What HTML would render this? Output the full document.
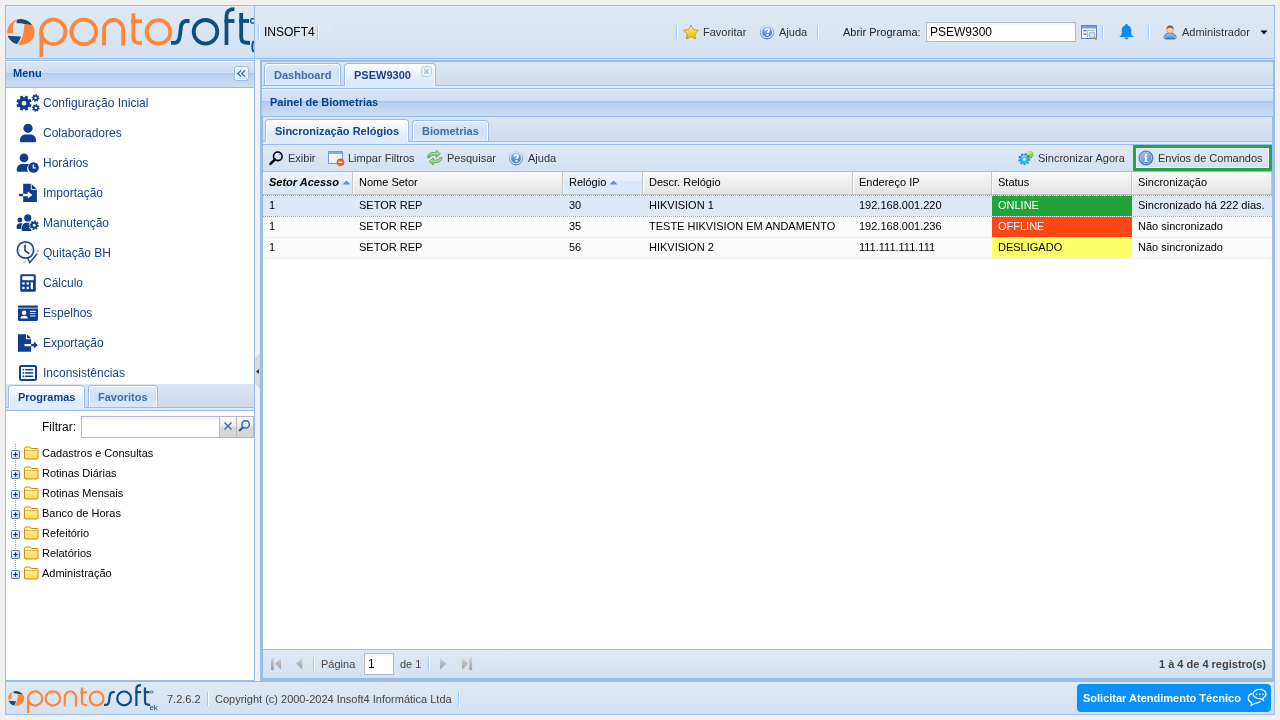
<!DOCTYPE html>
<html><head><meta charset="utf-8">
<style>
*{box-sizing:border-box;margin:0;padding:0}
html,body{width:1280px;height:720px;overflow:hidden;background:#f0f0f0;font-family:"Liberation Sans",sans-serif;position:relative}
body{will-change:transform}
.a{position:absolute}
.t{position:absolute;white-space:nowrap;line-height:13px;font-size:11px}
.t12{position:absolute;white-space:nowrap;line-height:14px;font-size:12px}
.b{font-weight:bold}
.sep{position:absolute;width:2px;height:14px;border-left:1px solid #98c8ff;border-right:1px solid #fff}
.hdr{background:linear-gradient(#dae7f6 0%,#cddef3 45%,#abc9ec 46%,#abc9ec 50%,#b8cfee 51%,#cbddf3 100%);box-shadow:inset 0 1px 0 #f3f7fb}
.tbg{background:linear-gradient(#dfe9f5,#d3e1f1)}
.tab{position:absolute;border:1px solid #99bce8;border-bottom:0;border-radius:4px 4px 0 0;box-shadow:inset 1px 1px 0 #fff,inset -1px 0 0 #fff;background:linear-gradient(#deecfd,#cfe1f8 50%,#dbe8f8)}
.tab.act{background:linear-gradient(#ffffff,#f2f7fe 25%,#deecfd 70%,#deecfd)}
.strip{position:absolute;height:4px;border-top:1px solid #99bce8;border-bottom:1px solid #99bce8;background:#deecfd}
</style></head><body>

<!-- ============ HEADER ============ -->
<div class="a tbg" style="left:5px;top:5px;width:1270px;height:54px;border:1px solid #99bce8"></div>
<div class="a" style="left:254px;top:6px;width:1px;height:52px;background:#99bce8"></div>


<svg class="a" style="left:0;top:0" width="254" height="58" viewBox="0 0 254 58">
<defs><clipPath id="tc"><path d="M16.6,0 H40 V22 L33,25.5 L24,24.5 L16.6,23Z"/></clipPath><clipPath id="ballc"><ellipse cx="20.9" cy="32" rx="13.7" ry="12.9"/></clipPath></defs>
<g id="logo">
 <g clip-path="url(#ballc)">
  <g clip-path="url(#tc)"><ellipse cx="20.9" cy="32" rx="11.6" ry="10.9" fill="none" stroke="#1c4a7c" stroke-width="4.4"/></g>
  <path d="M0,0 H17.3 L17.6,20 C14.8,21.5 13,23.5 12.9,27 V33.4 H0 Z" fill="#ff8636"/>
  <path d="M24.4,24 L33,25 L37,19 V48 H10 L17.8,45.2 C22.6,39.5 24.1,32 24.4,24Z" fill="#ff8636"/>
  <path d="M0,35.2 L20.9,36.5 C20.1,39.5 18.8,42 16.6,44.6 L14,48 H0Z" fill="#1c4a7c"/>
 </g>
 <g fill="none" stroke="#ff8636" stroke-width="3.8" stroke-linecap="butt">
  <circle cx="53.3" cy="31.9" r="12.2"/>
  <path d="M41.3,32 V57"/>
  <circle cx="83.8" cy="31.9" r="12.3"/>
  <path d="M104,45.5 V29.6 A9.6,9.6 0 0 1 123.2,29.6 V45.5"/>
  <path d="M133.4,13.2 V37 C133.4,42 136,43.2 142,43.2"/>
  <path d="M131,21.3 H142"/>
  <circle cx="158.5" cy="31.9" r="11.8"/>
 </g>
 <g fill="none" stroke="#0d5080" stroke-width="3.8">
  <path d="M171,42.9 H174.5 C178.3,42.9 179.4,39.8 179.9,35.5 L180.9,27.5 C181.4,23.2 183,21 186.5,21 H189.5"/>
  <circle cx="205.5" cy="31.8" r="11.8"/>
  <path d="M226.5,45 V16 C226.5,11 229,9.2 234.5,9.2"/>
  <path d="M224.5,21 H234.5"/>
  <path d="M241.2,13 V37 C241.2,42 243.5,43 250,43"/>
  <path d="M239.2,21 H249"/>
  <circle cx="252.8" cy="20.9" r="2.2" stroke-width="1.2"/>
 </g>
</g>
<path d="M253.6,41 C251.8,44 251.8,49 253.6,52" stroke="#0d5080" fill="none" stroke-width="2"/>
</svg>


<div class="a" style="left:260px;top:23px;width:71px;height:18px;background:linear-gradient(#dee8f5,#d8e4f3)"></div>
<div class="sep" style="left:258px;top:25px"></div>
<div class="t12" style="left:264px;top:25px;color:#000">INSOFT4</div>
<div class="sep" style="left:317px;top:25px"></div>
<div class="sep" style="left:676px;top:25px"></div>
<svg class="a" style="left:683px;top:24px" width="16" height="16" viewBox="0 0 16 16"><defs><linearGradient id="stg" x1="0" y1="0" x2="0" y2="1"><stop offset="0" stop-color="#fff7a8"/><stop offset="0.5" stop-color="#ffd83a"/><stop offset="1" stop-color="#f7b512"/></linearGradient></defs><path d="M8.00,1.00 L10.29,5.54 L15.32,6.32 L11.71,9.91 L12.53,14.93 L8.00,12.60 L3.47,14.93 L4.29,9.91 L0.68,6.32 L5.71,5.54Z" fill="url(#stg)" stroke="#c98a10" stroke-width="0.9" stroke-linejoin="round"/></svg>
<div class="t" style="left:703px;top:26px;color:#333">Favoritar</div>
<svg class="a" style="left:759px;top:24px" width="16" height="16" viewBox="0 0 16 16"><use href="#helpic"/></svg>
<div class="t" style="left:779px;top:26px;color:#333">Ajuda</div>
<div class="sep" style="left:817px;top:25px"></div>
<div class="t" style="left:843px;top:26px;color:#222">Abrir Programa:</div>
<div class="a" style="left:926px;top:22px;width:150px;height:20px;border:1px solid #b5b8c8;background:linear-gradient(#f0f0f0,#fff 3px,#fff)"></div>
<div class="t12" style="left:930px;top:25px;color:#000">PSEW9300</div>
<svg class="a" style="left:1081px;top:25px" width="17" height="16" viewBox="0 0 17 16"><rect x="0.5" y="0.5" width="15" height="13" fill="#f4f7fb" stroke="#5f85bd"/><rect x="1" y="1" width="14" height="2.5" fill="#79a0d6"/><rect x="2.5" y="5" width="3" height="1.3" fill="#3e6fb6"/><rect x="2.5" y="8.5" width="3" height="1.3" fill="#3e6fb6"/><path d="M6.5,5.5 H13.5 M6.5,5.5 V12" stroke="#9aa7b8" stroke-width="0.8"/><circle cx="11" cy="10" r="3" fill="#cfe3f7" stroke="#8cb0da" stroke-width="1"/><path d="M13,12.2 L15.5,14.8" stroke="#d08a3a" stroke-width="1.8"/></svg>
<div class="sep" style="left:1102px;top:25px"></div>
<svg class="a" style="left:1118px;top:23px" width="17" height="17" viewBox="0 0 17 17"><path d="M8.5,1 C9.4,1 9.9,1.6 9.9,2.4 C12.3,3 13.3,5 13.3,7.5 V11 C13.3,12 14.3,12.8 15.5,13.6 V14 H1.5 V13.6 C2.7,12.8 3.7,12 3.7,11 V7.5 C3.7,5 4.7,3 7.1,2.4 C7.1,1.6 7.6,1 8.5,1Z" fill="#0b8bf5"/><path d="M6.5,14.6 A2,2 0 0 0 10.5,14.6Z" fill="#0b8bf5"/></svg>
<div class="sep" style="left:1148px;top:25px"></div>
<svg class="a" style="left:1162px;top:24px" width="16" height="16" viewBox="0 0 16 16"><defs><linearGradient id="ush" x1="0" y1="0" x2="0" y2="1"><stop offset="0" stop-color="#9fd0ff"/><stop offset="1" stop-color="#2f86e6"/></linearGradient></defs><path d="M2,13.5 C2,10.5 4.5,9.2 8,9.2 C11.5,9.2 14,10.5 14,13.5 C14,14.6 13,15 12,15 H4 C3,15 2,14.6 2,13.5Z" fill="url(#ush)" stroke="#2a5cb8" stroke-width="0.8"/><circle cx="2.6" cy="13.4" r="1.2" fill="#f0a060"/><circle cx="13.4" cy="13.4" r="1.2" fill="#f0a060"/><ellipse cx="8" cy="5.6" rx="3.4" ry="3.8" fill="#fbd3a8" stroke="#c07a40" stroke-width="0.6"/><path d="M4.5,5.2 C4.5,2.5 6,1.4 8,1.4 C10,1.4 11.5,2.5 11.5,5.2 C10.5,4 9,3.8 8,3.8 C7,3.8 5.5,4 4.5,5.2Z" fill="#a0521e"/></svg>
<div class="t" style="left:1182px;top:26px;color:#333">Administrador</div>
<svg class="a" style="left:1260px;top:30px" width="8" height="5" viewBox="0 0 8 5"><path d="M0.5,0.5 H7.5 L4,4.5Z" fill="#000"/></svg>

<div class="a" style="left:5px;top:59px;width:1270px;height:1px;background:#dcdcdc"></div>
<!-- ============ MENU (west) ============ -->
<div class="a" style="left:5px;top:60px;width:250px;height:621px;border:1px solid #99bce8;background:#fff"></div>
<div class="a hdr" style="left:6px;top:61px;width:248px;height:26px"></div>
<div class="a" style="left:6px;top:87px;width:248px;height:1px;background:#99bce8"></div>


<div class="t b" style="left:13px;top:67px;color:#04408c">Menu</div>
<div class="a" style="left:234px;top:66px;width:15px;height:15px;border:1px solid #99bce8;border-radius:3px;background:linear-gradient(#fff,#e5f1fc);box-shadow:inset 0 0 0 1px #fff;background:linear-gradient(#fff,#fff 1px,#e6f2fd 2px,#d3e6fa)"></div>
<svg class="a" style="left:236px;top:68px" width="11" height="11" viewBox="0 0 11 11"><path d="M5,2.3 L1.8,5.5 L5,8.7 M8.9,2.3 L5.7,5.5 L8.9,8.7" fill="none" stroke="#2d5f98" stroke-width="1.2"/></svg>

<!-- items -->
<svg class="a" style="left:15px;top:93px" width="26" height="21" viewBox="0 0 26 21"><g fill="#0e3f8c" fill-rule="evenodd"><path d="M14.84,11.02 L16.65,11.72 L15.51,14.50 L13.73,13.73 L12.56,14.91 L13.34,16.68 L10.56,17.84 L9.85,16.04 L8.18,16.04 L7.48,17.85 L4.70,16.71 L5.47,14.93 L4.29,13.76 L2.52,14.54 L1.36,11.76 L3.16,11.05 L3.16,9.38 L1.35,8.68 L2.49,5.90 L4.27,6.67 L5.44,5.49 L4.66,3.72 L7.44,2.56 L8.15,4.36 L9.82,4.36 L10.52,2.55 L13.30,3.69 L12.53,5.47 L13.71,6.64 L15.48,5.86 L16.64,8.64 L14.84,9.35Z M11.30,10.20 A2.3,2.3 0 1 0 6.70,10.20 A2.3,2.3 0 1 0 11.30,10.20Z"/><path d="M23.50,4.75 L24.50,4.92 L24.20,6.40 L23.21,6.16 L22.75,6.84 L23.34,7.67 L22.09,8.51 L21.55,7.64 L20.75,7.80 L20.58,8.80 L19.10,8.50 L19.34,7.51 L18.66,7.05 L17.83,7.64 L16.99,6.39 L17.86,5.85 L17.70,5.05 L16.70,4.88 L17.00,3.40 L17.99,3.64 L18.45,2.96 L17.86,2.13 L19.11,1.29 L19.65,2.16 L20.45,2.00 L20.62,1.00 L22.10,1.30 L21.86,2.29 L22.54,2.75 L23.37,2.16 L24.21,3.41 L23.34,3.95Z M21.80,4.90 A1.2,1.2 0 1 0 19.40,4.90 A1.2,1.2 0 1 0 21.80,4.90Z"/><path d="M23.70,14.75 L24.70,14.92 L24.40,16.40 L23.41,16.16 L22.95,16.84 L23.54,17.67 L22.29,18.51 L21.75,17.64 L20.95,17.80 L20.78,18.80 L19.30,18.50 L19.54,17.51 L18.86,17.05 L18.03,17.64 L17.19,16.39 L18.06,15.85 L17.90,15.05 L16.90,14.88 L17.20,13.40 L18.19,13.64 L18.65,12.96 L18.06,12.13 L19.31,11.29 L19.85,12.16 L20.65,12.00 L20.82,11.00 L22.30,11.30 L22.06,12.29 L22.74,12.75 L23.57,12.16 L24.41,13.41 L23.54,13.95Z M22.00,14.90 A1.2,1.2 0 1 0 19.60,14.90 A1.2,1.2 0 1 0 22.00,14.90Z"/></g></svg>
<div class="t12" style="left:43px;top:96px;color:#15428b">Configuração Inicial</div>

<svg class="a" style="left:19px;top:123px" width="18" height="20" viewBox="0 0 18 20"><g fill="#0e3f8c"><circle cx="9" cy="5.3" r="4.6"/><path d="M1,17.5 C1,13.5 3.5,11.5 6.5,11.5 H11.5 C14.5,11.5 17,13.5 17,17.5 V18 C17,18.7 16.5,19.2 15.8,19.2 H2.2 C1.5,19.2 1,18.7 1,18Z"/></g></svg>
<div class="t12" style="left:43px;top:126px;color:#15428b">Colaboradores</div>

<svg class="a" style="left:16px;top:153px" width="24" height="20" viewBox="0 0 24 20"><g fill="#0e3f8c"><circle cx="8" cy="4.8" r="4.4"/><path d="M0.7,17.2 C0.7,13.2 3,11 6,11 H11.5 C12,11 12.5,11.1 13,11.2 A6.5,6.5 0 0 0 12,18.8 H1.9 C1.2,18.8 0.7,18.3 0.7,17.6Z"/><circle cx="17.5" cy="14.5" r="5.3"/></g><path d="M17.3,11.4 V14.9 H19.8" fill="none" stroke="#fff" stroke-width="1.2"/></svg>
<div class="t12" style="left:43px;top:156px;color:#15428b">Horários</div>

<svg class="a" style="left:14px;top:183px" width="24" height="20" viewBox="0 0 24 20"><path d="M9.2,0.8 H17.4 L22.9,6.3 V19 H9.2Z" fill="#0e3f8c"/><path d="M17.3,0.6 V6.4 H23.2" fill="none" stroke="#fff" stroke-width="0.9"/><path d="M5,10.8 H9.2 V13.2 H5Z" fill="#0e3f8c"/><path d="M9.2,10.8 H13.8 V8.6 L18.4,12 L13.8,15.4 V13.2 H9.2Z" fill="#fff"/></svg>
<div class="t12" style="left:43px;top:186px;color:#15428b">Importação</div>

<svg class="a" style="left:15px;top:213px" width="26" height="20" viewBox="0 0 26 20"><g fill="#0e3f8c"><circle cx="4.8" cy="7" r="2.4"/><path d="M1.5,14.8 C1.5,11.5 2.8,10.2 5,10.2 H7.6 C6.6,11.5 6.2,13.2 6.2,16 H2.5 C1.9,16 1.5,15.5 1.5,14.8Z"/><circle cx="12.75" cy="4.9" r="3.6"/><path d="M6.6,16.8 C6.6,12 8.5,9.8 11.5,9.8 H15.5 C16.2,9.8 16.8,10 17.3,10.3 C15.5,12.3 15.2,15.5 16.6,17.9 H7.6 C7,17.9 6.6,17.5 6.6,16.8Z"/></g>
<path d="M23.49,11.98 L24.80,12.13 L24.33,14.44 L23.07,14.08 L22.39,15.08 L23.21,16.11 L21.24,17.41 L20.61,16.26 L19.42,16.49 L19.27,17.80 L16.96,17.33 L17.32,16.07 L16.32,15.39 L15.29,16.21 L13.99,14.24 L15.14,13.61 L14.91,12.42 L13.60,12.27 L14.07,9.96 L15.33,10.32 L16.01,9.32 L15.19,8.29 L17.16,6.99 L17.79,8.14 L18.98,7.91 L19.13,6.60 L21.44,7.07 L21.08,8.33 L22.08,9.01 L23.11,8.19 L24.41,10.16 L23.26,10.79Z" fill="#fff"/><path d="M22.70,12.02 L24.00,12.23 L23.63,14.04 L22.35,13.73 L21.80,14.54 L22.58,15.61 L21.03,16.64 L20.35,15.51 L19.38,15.70 L19.17,17.00 L17.36,16.63 L17.67,15.35 L16.86,14.80 L15.79,15.58 L14.76,14.03 L15.89,13.35 L15.70,12.38 L14.40,12.17 L14.77,10.36 L16.05,10.67 L16.60,9.86 L15.82,8.79 L17.37,7.76 L18.05,8.89 L19.02,8.70 L19.23,7.40 L21.04,7.77 L20.73,9.05 L21.54,9.60 L22.61,8.82 L23.64,10.37 L22.51,11.05Z M20.70,12.20 A1.5,1.5 0 1 0 17.70,12.20 A1.5,1.5 0 1 0 20.70,12.20Z" fill="#0e3f8c" fill-rule="evenodd"/></svg>
<div class="t12" style="left:43px;top:216px;color:#15428b">Manutenção</div>

<svg class="a" style="left:14px;top:239px" width="26" height="26" viewBox="0 0 26 26"><g fill="none"><circle cx="11.5" cy="11" r="8.2" stroke="#234d8f" stroke-width="1.7"/><path d="M11.5,4.2 V5.5 M18.3,11 H17 M4.7,11 H6" stroke="#6d8fbf" stroke-width="0.8"/><path d="M11,5.8 V11.6 L15.2,14.8" stroke="#234d8f" stroke-width="1.7"/><path d="M13.5,18.8 L15.8,23.6 L23.2,14.8" stroke="#234d8f" stroke-width="1.5"/><path d="M23.8,10.6 V13.4 M22.4,12 H25.2" stroke="#8fa8d0" stroke-width="0.9"/><path d="M9,23.2 H12" stroke="#8fa8d0" stroke-width="0.9"/></g></svg>
<div class="t12" style="left:43px;top:246px;color:#15428b">Quitação BH</div>

<svg class="a" style="left:19px;top:273px" width="18" height="20" viewBox="0 0 18 20"><rect x="1.2" y="1.2" width="15.6" height="17.6" rx="1.5" fill="#0e3f8c"/><rect x="3.3" y="3.2" width="11.4" height="4" fill="#fff"/><g fill="#fff"><rect x="3.3" y="9.3" width="2.3" height="2.3"/><rect x="7.6" y="9.3" width="2.3" height="2.3"/><rect x="3.3" y="13.8" width="2.3" height="2.3"/><rect x="7.6" y="13.8" width="2.3" height="2.3"/><rect x="11.7" y="9.3" width="2.3" height="6.8"/></g></svg>
<div class="t12" style="left:43px;top:276px;color:#15428b">Cálculo</div>

<svg class="a" style="left:17px;top:304px" width="22" height="18" viewBox="0 0 22 18"><path d="M1,2.6 C1,1.9 1.5,1.4 2.2,1.4 H19.8 C20.5,1.4 21,1.9 21,2.6 V3.8 H1Z M1,4.6 H21 V15.8 C21,16.5 20.5,17 19.8,17 H2.2 C1.5,17 1,16.5 1,15.8Z" fill="#0e3f8c"/><circle cx="7.1" cy="8.8" r="2.3" fill="#fff"/><path d="M3.3,14.6 C3.3,12.5 4.8,11.7 7.1,11.7 C9.4,11.7 10.9,12.5 10.9,14.6Z" fill="#fff"/><g fill="#b9cbe6"><rect x="13" y="6.9" width="5.6" height="1"/><rect x="13" y="9.1" width="5.6" height="1"/><rect x="13" y="11.4" width="5.6" height="1.2"/></g><rect x="13" y="6.9" width="5.6" height="1" fill="#fff"/></svg>
<div class="t12" style="left:43px;top:306px;color:#15428b">Espelhos</div>

<svg class="a" style="left:17px;top:333px" width="22" height="20" viewBox="0 0 22 20"><g fill="#0e3f8c"><path d="M0.9,1.2 H9 V6.3 H14.1 V10.9 H7.5 V13.3 H14.1 V18.7 H0.9Z"/><path d="M10,1.2 L14.1,5.3 H10Z"/><path d="M14.1,10.9 H16.8 V8.6 L20.9,12.1 L16.8,15.6 V13.3 H14.1Z"/></g></svg>
<div class="t12" style="left:43px;top:336px;color:#15428b">Exportação</div>

<svg class="a" style="left:18px;top:364px" width="20" height="18" viewBox="0 0 20 18"><rect x="2" y="2" width="16" height="14" rx="1.5" fill="none" stroke="#0e3f8c" stroke-width="2"/><g fill="#0e3f8c"><circle cx="5.4" cy="5.6" r="0.95"/><circle cx="5.4" cy="8.9" r="0.95"/><circle cx="5.4" cy="12.2" r="0.95"/><rect x="7.2" y="4.9" width="8" height="1.5"/><rect x="7.2" y="8.2" width="8" height="1.5"/><rect x="7.2" y="11.5" width="8" height="1.5"/></g></svg>
<div class="t12" style="left:43px;top:366px;color:#15428b">Inconsistências</div>

<!-- tab bar Programas/Favoritos -->
<div class="a" style="left:6px;top:384px;width:248px;height:23px;background:linear-gradient(#dae5f3,#cfdcee)"></div>
<div class="strip" style="left:6px;top:407px;width:248px;border-left:0;border-right:0"></div>
<div class="tab act" style="left:8px;top:385px;width:77px;height:23px"></div>
<div class="t b" style="left:18px;top:391px;color:#15428b">Programas</div>
<div class="tab" style="left:88px;top:385px;width:70px;height:22px"></div>
<div class="t b" style="left:98px;top:391px;color:#416da3">Favoritos</div>

<!-- filter -->
<div class="t12" style="left:42px;top:420px;color:#000">Filtrar:</div>
<div class="a" style="left:81px;top:416px;width:173px;height:22px;border:1px solid #b5b8c8;background:linear-gradient(#eee,#fff 3px)"></div>
<div class="a" style="left:219px;top:417px;width:17px;height:20px;background:linear-gradient(#fbfbfb,#ececec 45%,#dadada 50%,#d3d3d3);border-left:1px solid #b5b8c8"></div>
<div class="a" style="left:236px;top:417px;width:17px;height:20px;background:linear-gradient(#fbfbfb,#ececec 45%,#dadada 50%,#d3d3d3);border-left:1px solid #b5b8c8"></div>
<svg class="a" style="left:223px;top:421px" width="10" height="10" viewBox="0 0 10 10"><path d="M1.5,1.5 L8.5,8.5 M8.5,1.5 L1.5,8.5" stroke="#3a6db5" stroke-width="1.4"/></svg>
<svg class="a" style="left:238px;top:419px" width="13" height="14" viewBox="0 0 13 14"><circle cx="7.6" cy="5.4" r="3.7" fill="none" stroke="#2a62b0" stroke-width="1.4"/><path d="M5,8.2 L1.2,12" stroke="#1f4f96" stroke-width="1.8"/></svg>

<svg class="a" style="left:0;top:0" width="0" height="0"><defs>
<linearGradient id="fold" x1="0" y1="0" x2="0" y2="1"><stop offset="0" stop-color="#fffaa8"/><stop offset="1" stop-color="#ffd658"/></linearGradient>
<linearGradient id="plusg" x1="0" y1="0" x2="1" y2="1"><stop offset="0" stop-color="#ffffff"/><stop offset="1" stop-color="#b9cde6"/></linearGradient>
<g id="treeic">
 <rect x="0.5" y="0.5" width="8" height="8" rx="1" fill="url(#plusg)" stroke="#5a7399"/>
 <path d="M2.2,4.5 H6.8 M4.5,2.2 V6.8" stroke="#16325e" stroke-width="1.2"/>
 <path d="M10.5,4.5 H11" stroke="#aaa" stroke-width="1"/>
 <path d="M13.5,-1.5 C13.5,-2.5 14,-3 15,-3 H18.5 C19.3,-3 19.6,-2.6 20,-2 L20.4,-1.5 H26 C26.8,-1.5 27,-1 27,-0.3 V8 C27,8.6 26.7,9 26,9 H14.5 C13.8,9 13.5,8.6 13.5,8Z" fill="url(#fold)" stroke="#c98b1a" stroke-width="1"/>
 <path d="M14,0.5 H26.5" stroke="#e0a93a" stroke-width="0.8"/>
</g></defs></svg>
<svg class="a" style="left:15px;top:444px" width="1" height="127"><path d="M0.5,0 V127" stroke="#a0a0a0" stroke-dasharray="1,1"/></svg>
<svg class="a" style="left:11px;top:444px" width="30" height="17" viewBox="0 -6 30 17"><use href="#treeic"/></svg>
<div class="t" style="left:42px;top:447px;color:#000">Cadastros e Consultas</div>
<svg class="a" style="left:11px;top:464px" width="30" height="17" viewBox="0 -6 30 17"><use href="#treeic"/></svg>
<div class="t" style="left:42px;top:467px;color:#000">Rotinas Diárias</div>
<svg class="a" style="left:11px;top:484px" width="30" height="17" viewBox="0 -6 30 17"><use href="#treeic"/></svg>
<div class="t" style="left:42px;top:487px;color:#000">Rotinas Mensais</div>
<svg class="a" style="left:11px;top:504px" width="30" height="17" viewBox="0 -6 30 17"><use href="#treeic"/></svg>
<div class="t" style="left:42px;top:507px;color:#000">Banco de Horas</div>
<svg class="a" style="left:11px;top:524px" width="30" height="17" viewBox="0 -6 30 17"><use href="#treeic"/></svg>
<div class="t" style="left:42px;top:527px;color:#000">Refeitório</div>
<svg class="a" style="left:11px;top:544px" width="30" height="17" viewBox="0 -6 30 17"><use href="#treeic"/></svg>
<div class="t" style="left:42px;top:547px;color:#000">Relatórios</div>
<svg class="a" style="left:11px;top:564px" width="30" height="17" viewBox="0 -6 30 17"><use href="#treeic"/></svg>
<div class="t" style="left:42px;top:567px;color:#000">Administração</div>

<!-- ============ CENTER ============ -->
<div class="a" style="left:260px;top:60px;width:1015px;height:622px;background:#99bce8"></div>
<!-- outer tab bar -->
<div class="a" style="left:262px;top:62px;width:1011px;height:23px;background:linear-gradient(#dde7f4,#cfdcee)"></div>
<div class="strip" style="left:262px;top:85px;width:1011px;border-left:0;border-right:0"></div>
<div class="tab" style="left:264px;top:63px;width:77px;height:22px"></div>
<div class="t b" style="left:274px;top:69px;color:#416da3">Dashboard</div>
<div class="tab act" style="left:344px;top:63px;width:92px;height:23px"></div>
<div class="t b" style="left:354px;top:69px;color:#15428b">PSEW9300</div>
<svg class="a" style="left:421px;top:66px" width="11" height="11" viewBox="0 0 11 11"><rect x="0.5" y="0.5" width="10" height="10" rx="3" fill="#eef4fc" stroke="#b4cbe8"/><path d="M3.3,3.3 L7.7,7.7 M7.7,3.3 L3.3,7.7" stroke="#a8bcd6" stroke-width="1.6"/></svg>
<!-- Painel header -->
<div class="a hdr" style="left:262px;top:89px;width:1011px;height:27px"></div>
<div class="t b" style="left:270px;top:96px;color:#04408c">Painel de Biometrias</div>
<!-- inner tab bar -->
<div class="a" style="left:263px;top:117px;width:1009px;height:24px;background:linear-gradient(#dde7f4,#cfdcee)"></div>
<div class="strip" style="left:263px;top:141px;width:1009px;border-left:0;border-right:0"></div>
<div class="tab act" style="left:265px;top:119px;width:144px;height:23px"></div>
<div class="t b" style="left:275px;top:125px;color:#15428b">Sincronização Relógios</div>
<div class="tab" style="left:412px;top:120px;width:77px;height:21px"></div>
<div class="t b" style="left:422px;top:125px;color:#416da3">Biometrias</div>
<!-- toolbar -->
<div class="a tbg" style="left:263px;top:145px;width:1009px;height:26px"></div>
<div class="a" style="left:263px;top:171px;width:1009px;height:1px;background:#99bce8"></div>

<svg class="a" style="left:0;top:0" width="0" height="0"><defs>
<radialGradient id="hlp2" cx="0.45" cy="0.3" r="0.7"><stop offset="0" stop-color="#8fb2e0"/><stop offset="0.7" stop-color="#5f8ecb"/><stop offset="1" stop-color="#4a78b8"/></radialGradient>
<linearGradient id="hring" x1="0" y1="0" x2="0" y2="1"><stop offset="0" stop-color="#c3d8f3"/><stop offset="1" stop-color="#3f6db3"/></linearGradient><g id="helpic"><circle cx="8" cy="8.2" r="6.7" fill="#d8e5f5" stroke="url(#hring)" stroke-width="1"/><circle cx="8" cy="8.2" r="5" fill="url(#hlp2)"/><path d="M6.2,6.6 C6.2,5.5 7,4.8 8.1,4.8 C9.2,4.8 10,5.5 10,6.4 C10,7.5 8.6,7.7 8.6,8.9 V9.1" fill="none" stroke="#fff" stroke-width="1.6"/><rect x="7.5" y="10.2" width="2" height="1.6" fill="#fff"/></g>
</defs></svg>
<svg class="a" style="left:269px;top:150px" width="16" height="16" viewBox="0 0 16 16"><circle cx="8.8" cy="6.3" r="4.3" fill="none" stroke="#000" stroke-width="1.6"/><path d="M10.5,3.9 L11.3,4.8" stroke="#000" stroke-width="1"/><path d="M6,9.4 L1.5,13.9" stroke="#000" stroke-width="2.6" stroke-linecap="round"/></svg>
<div class="t" style="left:288px;top:152px;color:#333">Exibir</div>
<svg class="a" style="left:327px;top:150px" width="18" height="17" viewBox="0 0 18 17"><defs><linearGradient id="wing" x1="0" y1="0" x2="1" y2="1"><stop offset="0" stop-color="#fff"/><stop offset="1" stop-color="#dfe6f0"/></linearGradient></defs><rect x="1.5" y="1.5" width="14" height="12" fill="url(#wing)" stroke="#6f9ad3"/><rect x="2" y="2" width="13" height="2" fill="#86aee2"/><circle cx="13.5" cy="12.3" r="3.5" fill="#f06a12" stroke="#c94f08" stroke-width="0.7"/><rect x="11.6" y="11.6" width="3.8" height="1.4" fill="#fff"/></svg>
<div class="t" style="left:348px;top:152px;color:#333">Limpar Filtros</div>
<svg class="a" style="left:426px;top:149px" width="18" height="18" viewBox="0 0 18 18"><defs><linearGradient id="grn" x1="0" y1="0" x2="0" y2="1"><stop offset="0" stop-color="#8fd27a"/><stop offset="0.5" stop-color="#a9df93"/><stop offset="1" stop-color="#4f9f40"/></linearGradient></defs><g fill="url(#grn)" stroke="#3f9033" stroke-width="0.6" stroke-linejoin="round"><path d="M1.2,8.6 C1.6,5.4 4,3.4 7.5,3.4 H10.2 V1.3 L14.4,4.8 L10.2,8.3 V6.2 H7.6 C5.6,6.2 4.2,7.1 3.8,8.6 Z"/><path d="M16.2,8.6 C15.8,11.8 13.4,13.8 9.9,13.8 H7.3 V16 L3.1,12.4 L7.3,8.9 V11 H9.8 C11.8,11 13.2,10.1 13.6,8.6 Z"/></g></svg>
<div class="t" style="left:447px;top:152px;color:#333">Pesquisar</div>
<svg class="a" style="left:508px;top:150px" width="16" height="16" viewBox="0 0 16 16"><use href="#helpic"/></svg>
<div class="t" style="left:528px;top:152px;color:#333">Ajuda</div>
<svg class="a" style="left:1017px;top:149px" width="19" height="18" viewBox="0 0 19 18"><defs><radialGradient id="bgear" cx="0.5" cy="0.55" r="0.5"><stop offset="0" stop-color="#3fe0ff"/><stop offset="0.6" stop-color="#1ab0f0"/><stop offset="1" stop-color="#1a78cc"/></radialGradient><radialGradient id="ggear" cx="0.4" cy="0.35" r="0.6"><stop offset="0" stop-color="#e2ff70"/><stop offset="1" stop-color="#5fb51a"/></radialGradient></defs>
<path d="M15.70,5.95 L16.68,6.15 L16.19,7.76 L15.26,7.37 L14.72,8.02 L15.27,8.87 L13.78,9.65 L13.40,8.72 L12.55,8.80 L12.35,9.78 L10.74,9.29 L11.13,8.36 L10.48,7.82 L9.63,8.37 L8.85,6.88 L9.78,6.50 L9.70,5.65 L8.72,5.45 L9.21,3.84 L10.14,4.23 L10.68,3.58 L10.13,2.73 L11.62,1.95 L12.00,2.88 L12.85,2.80 L13.05,1.82 L14.66,2.31 L14.27,3.24 L14.92,3.78 L15.77,3.23 L16.55,4.72 L15.62,5.10Z" fill="url(#ggear)"/><circle cx="12.7" cy="5.8" r="0.9" fill="#9cc84a"/>
<path d="M11.77,9.63 L13.19,9.86 L13.00,11.73 L11.56,11.66 L11.06,12.70 L12.01,13.79 L10.66,15.10 L9.60,14.12 L8.55,14.60 L8.58,16.04 L6.71,16.18 L6.52,14.75 L5.41,14.44 L4.50,15.56 L2.98,14.46 L3.75,13.25 L3.10,12.29 L1.69,12.57 L1.23,10.75 L2.60,10.32 L2.72,9.17 L1.45,8.47 L2.27,6.78 L3.60,7.33 L4.43,6.53 L3.91,5.18 L5.62,4.41 L6.29,5.69 L7.44,5.61 L7.90,4.24 L9.71,4.75 L9.40,6.16 L10.33,6.83 L11.57,6.09 L12.63,7.64 L11.48,8.52Z M8.60,10.20 A1.4,1.4 0 1 0 5.80,10.20 A1.4,1.4 0 1 0 8.60,10.20Z" fill="url(#bgear)" fill-rule="evenodd"/><circle cx="7.2" cy="10.2" r="1.4" fill="#eef8ff"/><path d="M4.6,8.2 A3.2,2.8 0 0 1 9.8,8.2" fill="none" stroke="#d5f4ff" stroke-width="0.9"/></svg>
<div class="t" style="left:1038px;top:152px;color:#333">Sincronizar Agora</div>
<div class="a" style="left:1133px;top:145px;width:139px;height:26px;border:3px solid #1fa84a"></div>
<div class="a" style="left:1136px;top:148px;width:133px;height:20px;box-shadow:inset 1px 1px 0 #eef0fb,inset -1px -1px 0 #eef0fb"></div>
<svg class="a" style="left:1138px;top:150px" width="16" height="16" viewBox="0 0 16 16"><defs><radialGradient id="infg" cx="0.45" cy="0.35" r="0.65"><stop offset="0" stop-color="#aac6ec"/><stop offset="0.75" stop-color="#5d8dcc"/><stop offset="1" stop-color="#3a68ad"/></radialGradient></defs><circle cx="8" cy="8" r="7" fill="url(#infg)" stroke="#3f6fb6" stroke-width="0.9"/><circle cx="8" cy="8" r="5.6" fill="none" stroke="#d6e4f6" stroke-width="0.6"/><rect x="7" y="4" width="2" height="1.6" fill="#fff"/><path d="M6.4,6.6 H8.9 V10.9 H9.8 V12 H6.3 V10.9 H7.1 V7.6 H6.4Z" fill="#fff"/></svg>
<div class="t" style="left:1158px;top:152px;color:#333">Envios de Comandos</div>

<!-- grid body -->
<div class="a" style="left:263px;top:172px;width:1009px;height:477px;background:#fff"></div>
<div class="a" style="left:263px;top:194px;width:1009px;height:1px;background:#c5c5c5"></div>
<div class="a" style="left:263px;top:172px;width:90px;height:22px;background:linear-gradient(#ebf3fd,#e6effb 40%,#d9e8fb 41%,#dbe9fa);border-right:1px solid #c5c5c5;box-shadow:inset 1px 0 0 #f4f8fe"></div>
<div class="t" style="left:269px;top:176px;color:#000;font-weight:bold;font-style:italic;">Setor Acesso</div>
<div class="a" style="left:353px;top:172px;width:210px;height:22px;background:linear-gradient(#f9f9f9,#e3e4e6);border-right:1px solid #c5c5c5;box-shadow:inset 1px 0 0 #fdfdfd"></div>
<div class="t" style="left:359px;top:176px;color:#000;">Nome Setor</div>
<div class="a" style="left:563px;top:172px;width:80px;height:22px;background:linear-gradient(#ebf3fd,#e6effb 40%,#d9e8fb 41%,#dbe9fa);border-right:1px solid #c5c5c5;box-shadow:inset 1px 0 0 #f4f8fe"></div>
<div class="t" style="left:569px;top:176px;color:#000;">Relógio</div>
<div class="a" style="left:643px;top:172px;width:210px;height:22px;background:linear-gradient(#f9f9f9,#e3e4e6);border-right:1px solid #c5c5c5;box-shadow:inset 1px 0 0 #fdfdfd"></div>
<div class="t" style="left:649px;top:176px;color:#000;">Descr. Relógio</div>
<div class="a" style="left:853px;top:172px;width:139px;height:22px;background:linear-gradient(#f9f9f9,#e3e4e6);border-right:1px solid #c5c5c5;box-shadow:inset 1px 0 0 #fdfdfd"></div>
<div class="t" style="left:859px;top:176px;color:#000;">Endereço IP</div>
<div class="a" style="left:992px;top:172px;width:140px;height:22px;background:linear-gradient(#f9f9f9,#e3e4e6);border-right:1px solid #c5c5c5;box-shadow:inset 1px 0 0 #fdfdfd"></div>
<div class="t" style="left:998px;top:176px;color:#000;">Status</div>
<div class="a" style="left:1132px;top:172px;width:140px;height:22px;background:linear-gradient(#f9f9f9,#e3e4e6);border-right:1px solid #c5c5c5;box-shadow:inset 1px 0 0 #fdfdfd"></div>
<div class="t" style="left:1138px;top:176px;color:#000;">Sincronização</div>
<svg class="a" style="left:342px;top:180px" width="9" height="5" viewBox="0 0 9 5"><path d="M0.5,4.5 L4.5,0.5 L8.5,4.5Z" fill="#5b8fd5"/></svg>
<svg class="a" style="left:609px;top:180px" width="9" height="5" viewBox="0 0 9 5"><path d="M0.5,4.5 L4.5,0.5 L8.5,4.5Z" fill="#5b8fd5"/></svg>
<div class="a" style="left:263px;top:196px;width:1009px;height:20px;background:#dfe8f6"></div>
<div class="a" style="left:992px;top:196px;width:140px;height:20px;background:#22a33a"></div>
<div class="t" style="left:269px;top:199px;color:#000">1</div>
<div class="t" style="left:359px;top:199px;color:#000">SETOR REP</div>
<div class="t" style="left:569px;top:199px;color:#000">30</div>
<div class="t" style="left:649px;top:199px;color:#000">HIKVISION 1</div>
<div class="t" style="left:859px;top:199px;color:#000">192.168.001.220</div>
<div class="t" style="left:998px;top:199px;color:#fff">ONLINE</div>
<div class="t" style="left:1138px;top:199px;color:#000">Sincronizado há 222 dias.</div>
<div class="a" style="left:263px;top:217px;width:1009px;height:20px;background:#fafafa"></div>
<div class="a" style="left:263px;top:237px;width:1009px;height:1px;background:#ededed"></div>
<div class="a" style="left:992px;top:217px;width:140px;height:20px;background:#ff4614"></div>
<div class="t" style="left:269px;top:220px;color:#000">1</div>
<div class="t" style="left:359px;top:220px;color:#000">SETOR REP</div>
<div class="t" style="left:569px;top:220px;color:#000">35</div>
<div class="t" style="left:649px;top:220px;color:#000">TESTE HIKVISION EM ANDAMENTO</div>
<div class="t" style="left:859px;top:220px;color:#000">192.168.001.236</div>
<div class="t" style="left:998px;top:220px;color:#fff">OFFLINE</div>
<div class="t" style="left:1138px;top:220px;color:#000">Não sincronizado</div>
<div class="a" style="left:263px;top:238px;width:1009px;height:20px;background:#fafafa"></div>
<div class="a" style="left:263px;top:258px;width:1009px;height:1px;background:#ededed"></div>
<div class="a" style="left:992px;top:238px;width:140px;height:20px;background:#ffff66"></div>
<div class="t" style="left:269px;top:241px;color:#000">1</div>
<div class="t" style="left:359px;top:241px;color:#000">SETOR REP</div>
<div class="t" style="left:569px;top:241px;color:#000">56</div>
<div class="t" style="left:649px;top:241px;color:#000">HIKVISION 2</div>
<div class="t" style="left:859px;top:241px;color:#000">111.111.111.111</div>
<div class="t" style="left:998px;top:241px;color:#000">DESLIGADO</div>
<div class="t" style="left:1138px;top:241px;color:#000">Não sincronizado</div>
<div class="a" style="left:263px;top:195px;width:1009px;height:1px;background:repeating-linear-gradient(90deg,#8aa9e3 0 1px,transparent 1px 2px)"></div>
<div class="a" style="left:263px;top:216px;width:1009px;height:1px;background:repeating-linear-gradient(90deg,#8aa9e3 0 1px,#fff 1px 2px)"></div>

<!-- paging toolbar -->
<div class="a tbg" style="left:263px;top:650px;width:1009px;height:28px"></div>



<svg class="a" style="left:0;top:0" width="0" height="0"><defs>
<linearGradient id="gry" x1="0" y1="0" x2="0" y2="1"><stop offset="0" stop-color="#d2d2d2"/><stop offset="1" stop-color="#9c9c9c"/></linearGradient>
</defs></svg>
<div class="a" style="left:265px;top:653px;width:22px;height:22px;border:1px solid #dde4ee;border-radius:3px"></div>
<div class="a" style="left:289px;top:653px;width:22px;height:22px;border:1px solid #dde4ee;border-radius:3px"></div>
<div class="a" style="left:432px;top:653px;width:22px;height:22px;border:1px solid #dde4ee;border-radius:3px"></div>
<div class="a" style="left:456px;top:653px;width:22px;height:22px;border:1px solid #dde4ee;border-radius:3px"></div>
<svg class="a" style="left:270px;top:657px" width="13" height="14" viewBox="0 0 13 14"><rect x="1" y="1" width="2.8" height="12" fill="url(#gry)"/><path d="M11,1 V12.5 L5,6.8Z" fill="url(#gry)"/></svg>
<svg class="a" style="left:295px;top:657px" width="9" height="14" viewBox="0 0 9 14"><path d="M7.2,1 V12.5 L1,6.8Z" fill="url(#gry)"/></svg>
<div class="sep" style="left:313px;top:657px"></div>
<div class="t" style="left:321px;top:658px;color:#444">Página</div>
<div class="a" style="left:364px;top:653px;width:30px;height:22px;border:1px solid #b5b8c8;background:linear-gradient(#f0f0f0,#fff 3px)"></div>
<div class="t12" style="left:368px;top:657px;color:#000">1</div>
<div class="t" style="left:400px;top:658px;color:#444">de 1</div>
<div class="sep" style="left:428px;top:657px"></div>
<svg class="a" style="left:439px;top:657px" width="9" height="14" viewBox="0 0 9 14"><path d="M1,1 V12.5 L7.2,6.8Z" fill="url(#gry)"/></svg>
<svg class="a" style="left:461px;top:657px" width="13" height="14" viewBox="0 0 13 14"><path d="M1,1 V12.5 L7,6.8Z" fill="url(#gry)"/><rect x="8.3" y="1" width="2.8" height="12" fill="url(#gry)"/></svg>
<div class="t b" style="left:1159px;top:658px;color:#444">1 à 4 de 4 registro(s)</div>

<svg class="a" style="left:255px;top:353px" width="5" height="36" viewBox="0 0 5 36"><path d="M5,0 V36 L0,31 V5Z" fill="#d9d9d9"/><path d="M4,16 V21 L1,18.5Z" fill="#333"/></svg>

<!-- ============ FOOTER ============ -->
<div class="a tbg" style="left:5px;top:681px;width:1270px;height:34px;border:1px solid #99bce8"></div>


<svg class="a" style="left:0;top:0" width="260" height="720" viewBox="0 0 260 720"><g transform="translate(3.9,679.8) scale(0.585)"><use href="#logo"/></g>
<text x="149.5" y="709.5" font-family="Liberation Sans" font-size="8" fill="#0d5080" letter-spacing="-0.3">ek</text>
</svg>
<div class="t" style="left:167px;top:693px;color:#444">7.2.6.2</div>
<div class="sep" style="left:207px;top:692px"></div>
<div class="t" style="left:215px;top:693px;color:#444">Copyright (c) 2000-2024 Insoft4 Informática Ltda</div>
<div class="sep" style="left:458px;top:692px"></div>
<div class="a" style="left:1077px;top:684px;width:194px;height:28px;background:#0890fd;border-radius:4px"></div>
<div class="t b" style="left:1083px;top:692px;color:#fff">Solicitar Atendimento Técnico</div>
<svg class="a" style="left:1244px;top:686px" width="26" height="22" viewBox="0 0 26 22"><g fill="none" stroke="#fff" stroke-width="1.2" stroke-linejoin="round"><path d="M15.6,3.4 C19.2,3.4 22,5.4 22,8 C22,9.8 20.8,11.2 19,12 L19.6,14.6 L16.6,12.5 C16.3,12.6 15.9,12.6 15.6,12.6 C12,12.6 9.2,10.6 9.2,8 C9.2,5.4 12,3.4 15.6,3.4Z"/><path d="M8.6,7.3 C5.8,8.1 4.2,10.1 4.2,12.2 C4.2,14.1 5.5,15.7 7.6,16.6 L7.1,19.6 L10.6,17.4 C13.2,17.4 15.5,16.4 16.7,15.2"/></g><g fill="#fff"><circle cx="12.7" cy="8.2" r="0.8"/><circle cx="15.8" cy="8.2" r="0.8"/><circle cx="18.9" cy="8.2" r="0.8"/></g></svg>

</body></html>
